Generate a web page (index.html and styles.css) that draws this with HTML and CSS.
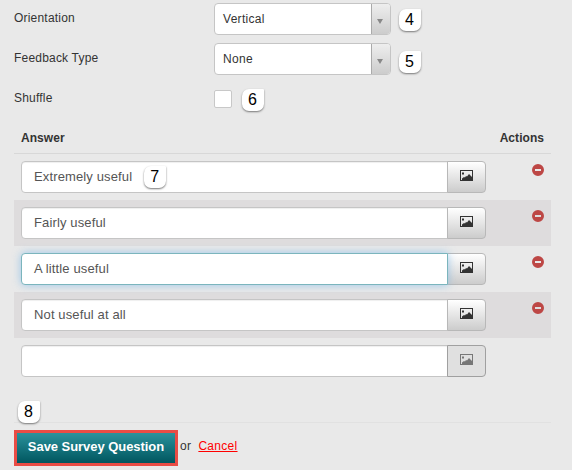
FILE: index.html
```
<!DOCTYPE html>
<html lang="en">
<head>
<meta charset="utf-8">
<title>Survey Question</title>
<link rel="stylesheet" href="styles.css">
</head>
<body>
<svg class="defs" aria-hidden="true">
  <symbol id="image" viewBox="0 0 13 11"><path fill-rule="evenodd" d="M0 0H13V11H0ZM1 1V10H12V1Z"/><path d="M2 10V8.5L4 7 5 7.5 6 6 7 6.5 9 4 12 7V10Z"/><rect x="2" y="2.5" width="2" height="2"/></symbol>
  <symbol id="minus" viewBox="0 0 12 12"><path fill-rule="evenodd" d="M6 0A6 6 0 1 1 6 12A6 6 0 1 1 6 0ZM3 5V7H9V5Z"/></symbol>
</svg>
<form class="page">
  <div class="field"><label>Orientation</label><div class="select"><span>Vertical</span><i></i></div><b class="badge b4">4</b></div>
  <div class="field"><label>Feedback Type</label><div class="select"><span>None</span><i></i></div><b class="badge b5">5</b></div>
  <div class="field"><label>Shuffle</label><div class="check"></div><b class="badge b6">6</b></div>
  <div class="head"><span>Answer</span><span>Actions</span></div>
  <div class="row"><div class="input"><span>Extremely useful</span><b class="badge b7">7</b></div><div class="pick"><svg><use href="#image"/></svg></div><svg class="remove"><use href="#minus"/></svg></div>
  <div class="row alt"><div class="input">Fairly useful</div><div class="pick"><svg><use href="#image"/></svg></div><svg class="remove"><use href="#minus"/></svg></div>
  <div class="row"><div class="input focus">A little useful</div><div class="pick"><svg><use href="#image"/></svg></div><svg class="remove"><use href="#minus"/></svg></div>
  <div class="row alt"><div class="input">Not useful at all</div><div class="pick"><svg><use href="#image"/></svg></div><svg class="remove"><use href="#minus"/></svg></div>
  <div class="row"><div class="input"></div><div class="pick disabled"><svg><use href="#image"/></svg></div></div>
  <div class="foot">
    <b class="badge b8">8</b>
    <div class="save">Save Survey Question</div><span class="or">or</span><a class="cancel">Cancel</a>
  </div>
</form>
</body>
</html>
```
FILE: styles.css
```
* { box-sizing: border-box; }
body {
  margin: 0;
  height: 470px;
  overflow: hidden;
  background: #e9e9e9;
  color: #333;
  font: 12px/18px "Liberation Sans", Arial, sans-serif;
  letter-spacing: .2px;
}
.defs { position: absolute; width: 0; height: 0; }
.page { width: 537px; margin-left: 14px; padding-top: 3px; }
.field { display: flex; height: 40px; }
.field label { width: 200px; padding-top: 6px; }
.select {
  display: flex;
  width: 177px;
  height: 32px;
  border: 1px solid #c5c5c5;
  border-radius: 4px;
  background: #fff;
  overflow: hidden;
}
.select span { flex: 1; padding: 6px 8px; letter-spacing: .3px; }
.select i {
  width: 19px;
  border-left: 1px solid #aaa;
  background: linear-gradient(#eee, #ccc);
}
.select i::before {
  content: "";
  display: block;
  margin: 15px 0 0 5px;
  width: 0;
  border: 3.5px solid transparent;
  border-top: 5px solid #888;
  border-bottom: 0;
}
.check {
  width: 18px;
  height: 18px;
  margin-top: 7px;
  border: 1px solid #c8c8c8;
  border-radius: 2px;
  background: #fff;
}
.badge {
  flex: none;
  width: 22px;
  height: 22px;
  border-radius: 7px 1px 7px 7px;
  background: #fff;
  box-shadow: 0 1px 2px #777;
  color: #000;
  font: 16px/22px "Liberation Sans", Arial, sans-serif;
  letter-spacing: 0;
  text-align: center;
  text-indent: -1px;
}
.b4 { margin: 6px 0 0 8px; }
.b5 { margin: 8px 0 0 8px; }
.b6 { margin: 6px 0 0 10px; }
.b7 { margin-left: 12px; }
.b8 { position: absolute; left: 4px; top: -22px; }
.head {
  display: flex;
  justify-content: space-between;
  height: 31px;
  padding: 6px 7px 0;
  border-bottom: 1px solid #d8d8d8;
  font-weight: bold;
  letter-spacing: .05px;
}
.row { display: flex; height: 46px; padding: 7px; }
.alt { background: #dedcdd; }
.input {
  display: flex;
  align-items: center;
  width: 427px;
  height: 32px;
  padding: 0 12px;
  border: 1px solid #c5c5c5;
  border-radius: 4px 0 0 4px;
  background: #fff;
  box-shadow: inset 0 1px 1px #0001;
  color: #555;
  font-size: 13px;
  letter-spacing: .13px;
}
.focus {
  position: relative;
  border-color: #7bb5bd;
  box-shadow: 0 0 8px #66afe999;
}
.pick {
  width: 39px;
  height: 32px;
  margin-left: -1px;
  padding: 8px 0 0 12px;
  border: 1px solid #b8b8b8;
  border-radius: 0 4px 4px 0;
  background: linear-gradient(#fff, #ccc);
}
.pick svg { display: block; width: 13px; height: 11px; fill: #333; }
.disabled { background: #e0e0e0; border-color: #a0a0a0; }
.disabled svg { fill: #777; }
.remove { width: 12px; height: 12px; margin: 3px 0 0 auto; fill: #bd4745; }
.foot {
  position: relative;
  display: flex;
  margin-top: 38px;
  padding-top: 7px;
  border-top: 1px solid #e1e1e1;
}
.save {
  width: 164px;
  height: 36px;
  border: 3px solid #e84c45;
  background: linear-gradient(#2a929c, #00565f);
  color: #fff;
  font-size: 13px;
  font-weight: bold;
  letter-spacing: -.05px;
  line-height: 28px;
  text-align: center;
  white-space: nowrap;
}
.or { padding: 7px 0 0 2px; letter-spacing: .35px; }
.cancel { margin-left: 7px; padding-top: 7px; color: #f00; text-decoration: underline; letter-spacing: .3px; }
```
